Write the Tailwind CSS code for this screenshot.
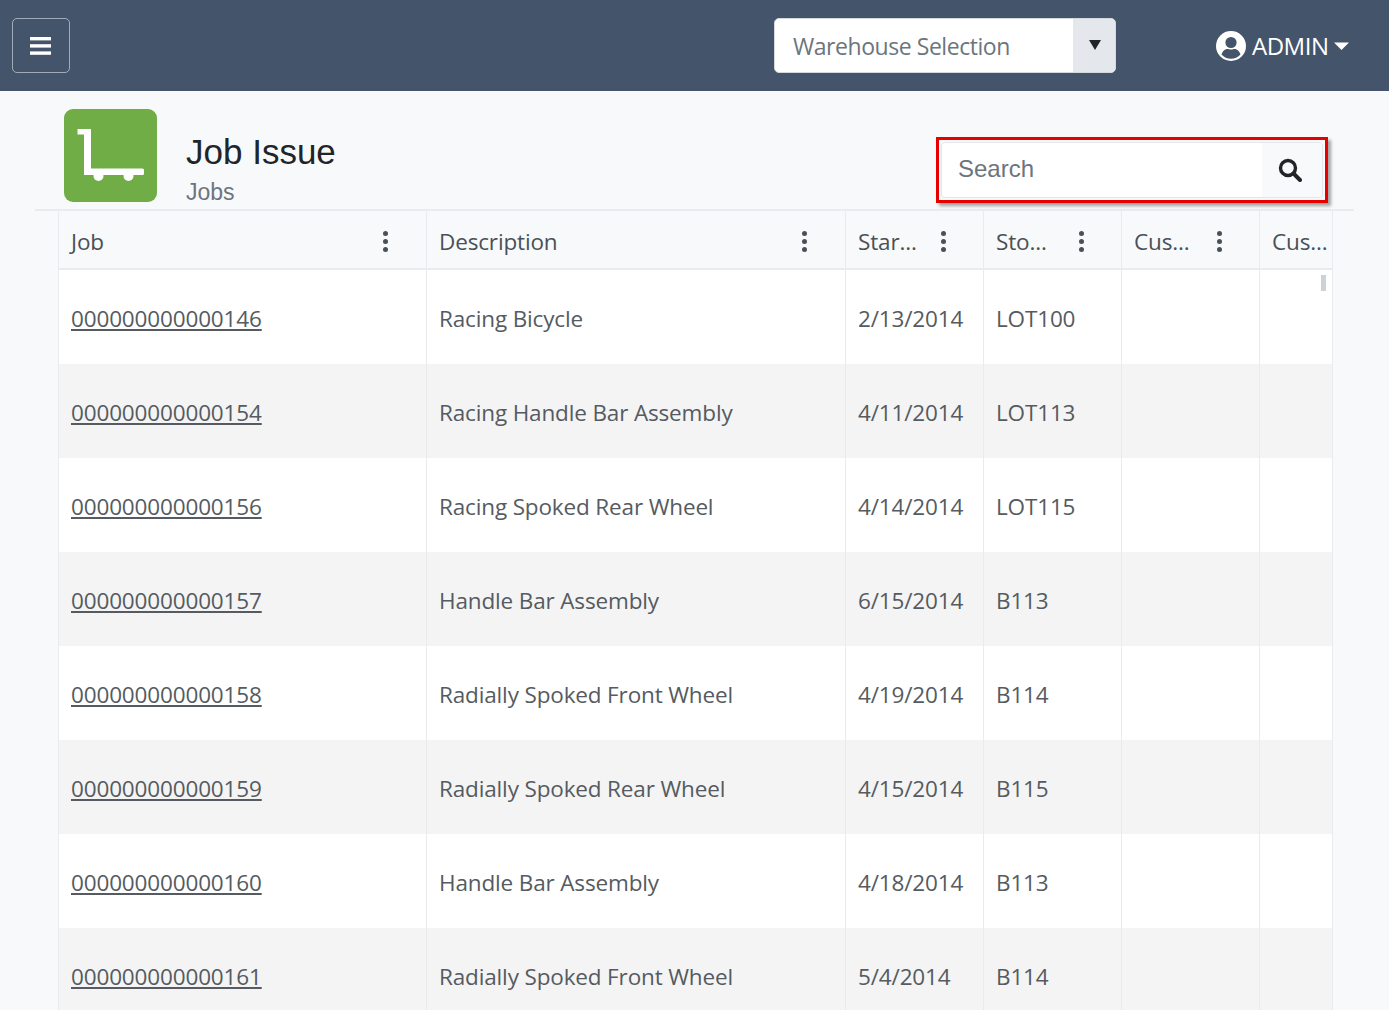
<!DOCTYPE html>
<html lang="en">
<head>
<meta charset="UTF-8">
<title>Job Issue</title>
<script src="https://cdn.jsdelivr.net/npm/@tailwindcss/browser@4"></script>
</head>
<body class="bg-white overflow-hidden w-[1393px] font-['Open_Sans',sans-serif]">
<div class="w-[1389px] h-[1010px] bg-[#f8f9fa] overflow-hidden">
  <header class="h-[91px] bg-[#44546a] flex items-center">
    <button class="ml-3 w-[58px] h-[55px] border border-white/50 rounded-[5px] flex items-center justify-center pr-[2px]">
      <svg width="21" height="18" viewBox="0 0 21 18" fill="#fff"><rect y="0" width="21" height="3.4"/><rect y="7.2" width="21" height="3.4"/><rect y="14.4" width="21" height="3.4"/></svg>
    </button>
    <div class="ml-[704px] w-[342px] h-[55px] flex rounded-[5px] overflow-hidden border border-[#d5d8dc] bg-white">
      <div class="flex-1 pl-[18px] pt-[2px] flex items-center text-[23px] text-[#6c757d] tracking-[-0.45px]">Warehouse Selection</div>
      <div class="w-[42px] bg-[#e4e7eb] flex items-center justify-center pb-[1px] pl-[2px]">
        <svg width="12" height="10" viewBox="0 0 12 10" fill="#212529"><path d="M0 0h12L6 10z"/></svg>
      </div>
    </div>
    <div class="ml-[100px] flex items-center text-white">
      <svg width="30" height="30" viewBox="0 0 30 30"><circle cx="15" cy="15" r="15" fill="#fff"/><circle cx="15" cy="11.5" r="5.6" fill="#44546a"/><path d="M5.5 23.5c1.2-4 4-5.600 6-5.600 1 0 1.800.7 3.500.7s2.500-.7 3.500-.7c2 0 4.800 1.600 6 5.600-2.400 2.700-5.800 4.300-9.500 4.300s-7.100-1.600-9.500-4.300z" fill="#44546a"/></svg>
      <span class="ml-[6px] text-[24px] tracking-[-0.5px] leading-none">ADMIN</span>
      <svg class="ml-[6px]" width="15" height="8" viewBox="0 0 15 8" fill="#fff"><path d="M0 .5h15L7.500 8z"/></svg>
    </div>
  </header>

  <section class="relative h-[120px] ml-[35px] w-[1319px] border-b-2 border-[#e9ecef]">
    <div class="absolute left-[29px] top-[18px] w-[93px] h-[93px] rounded-[9px] bg-[#70ad47] flex items-center justify-center">
      <svg width="93" height="93" viewBox="0 0 93 93" fill="#fff">
        <path d="M13.500 20h13.500v39.500h51.500a1.500 1.500 0 0 1 1.500 1.500v3.500a1.500 1.500 0 0 1-1.500 1.500h-58.500v-40.500h-6.500z"/>
        <circle cx="34.500" cy="67" r="5"/><circle cx="64.500" cy="67" r="5"/>
      </svg>
    </div>
    <div class="absolute left-[151px] top-[40px] font-['Liberation_Sans',sans-serif]">
      <h1 class="text-[35px] leading-[42px] text-[#212529]">Job Issue</h1>
      <p class="text-[23px] leading-[28px] mt-[5px] text-[#6c757d]">Jobs</p>
    </div>
    <div class="absolute left-[901px] top-[46px] w-[392px] h-[66px] border-[3px] border-[#e60000] p-[2px] shadow-[3px_3px_3px_rgba(0,0,0,0.35)]">
      <div class="h-full flex border border-[#e3e6ea] rounded-[4px] bg-white overflow-hidden">
        <div class="flex-1 pl-[16px] pb-[2px] flex items-center text-[24px] text-[#6c757d] font-['Liberation_Sans',sans-serif]">Search</div>
        <div class="w-[60px] bg-[#f8f9fa] flex items-center justify-center pr-[5px]">
          <svg width="24" height="24" viewBox="0 0 24 24" fill="none" stroke="#212529"><circle cx="10" cy="10" r="7.500" stroke-width="3.400"/><path d="M15.500 15.500l6.500 6.500" stroke-width="4" stroke-linecap="round"/></svg>
        </div>
      </div>
    </div>
  </section>

  <div class="ml-[58px] w-[1275px] border-l border-r border-[#e9ecef] bg-white">
    <div class="grid grid-cols-[367px_419px_138px_138px_138px_1fr] h-[59px] bg-[#f8f9fa] border-b-2 border-[#e9ecef] text-[22.5px] text-[#495057] tracking-[-0.15px]">
      <div class="flex items-center justify-between pl-3 pt-[3px] pr-[38px]"><span class="pt-[2px]">Job</span> <i class="flex flex-col gap-[3px]"><b class="w-[5px] h-[5px] rounded-full bg-[#495057]"></b><b class="w-[5px] h-[5px] rounded-full bg-[#495057]"></b><b class="w-[5px] h-[5px] rounded-full bg-[#495057]"></b></i></div>
      <div class="flex items-center justify-between pl-3 pt-[3px] pr-[38px] border-l border-[#e9ecef]"><span class="pt-[2px]">Description</span> <i class="flex flex-col gap-[3px]"><b class="w-[5px] h-[5px] rounded-full bg-[#495057]"></b><b class="w-[5px] h-[5px] rounded-full bg-[#495057]"></b><b class="w-[5px] h-[5px] rounded-full bg-[#495057]"></b></i></div>
      <div class="flex items-center justify-between pl-3 pt-[3px] pr-[37px] border-l border-[#e9ecef]"><span class="pt-[2px]">Star...</span> <i class="flex flex-col gap-[3px]"><b class="w-[5px] h-[5px] rounded-full bg-[#495057]"></b><b class="w-[5px] h-[5px] rounded-full bg-[#495057]"></b><b class="w-[5px] h-[5px] rounded-full bg-[#495057]"></b></i></div>
      <div class="flex items-center justify-between pl-3 pt-[3px] pr-[37px] border-l border-[#e9ecef]"><span class="pt-[2px]">Sto...</span> <i class="flex flex-col gap-[3px]"><b class="w-[5px] h-[5px] rounded-full bg-[#495057]"></b><b class="w-[5px] h-[5px] rounded-full bg-[#495057]"></b><b class="w-[5px] h-[5px] rounded-full bg-[#495057]"></b></i></div>
      <div class="flex items-center justify-between pl-3 pt-[3px] pr-[37px] border-l border-[#e9ecef]"><span class="pt-[2px]">Cus...</span> <i class="flex flex-col gap-[3px]"><b class="w-[5px] h-[5px] rounded-full bg-[#495057]"></b><b class="w-[5px] h-[5px] rounded-full bg-[#495057]"></b><b class="w-[5px] h-[5px] rounded-full bg-[#495057]"></b></i></div>
      <div class="flex items-center pl-3 pt-[3px] border-l border-[#e9ecef]"><span class="pt-[2px]">Cus...</span></div>
    </div>

    <div class="relative text-[22.5px] text-[#555b61] tracking-[-0.15px]">
      <div class="absolute right-[6px] top-[5px] w-[5px] h-[16px] bg-[#cfd2d5]"></div>
      <div class="grid grid-cols-[367px_419px_138px_138px_138px_1fr] h-[94px] items-stretch bg-white">
        <div class="flex items-center pl-3 pt-[4px]"><a href="#" class="underline">000000000000146</a></div>
        <div class="flex items-center pl-3 pt-[4px] border-l border-[#e9ecef]">Racing Bicycle</div>
        <div class="flex items-center pl-3 pt-[4px] border-l border-[#e9ecef]">2/13/2014</div>
        <div class="flex items-center pl-3 pt-[4px] border-l border-[#e9ecef]">LOT100</div>
        <div class="border-l border-[#e9ecef]"></div><div class="border-l border-[#e9ecef]"></div>
      </div>
      <div class="grid grid-cols-[367px_419px_138px_138px_138px_1fr] h-[94px] items-stretch bg-[#f4f4f4]">
        <div class="flex items-center pl-3 pt-[4px]"><a href="#" class="underline">000000000000154</a></div>
        <div class="flex items-center pl-3 pt-[4px] border-l border-[#e9ecef]">Racing Handle Bar Assembly</div>
        <div class="flex items-center pl-3 pt-[4px] border-l border-[#e9ecef]">4/11/2014</div>
        <div class="flex items-center pl-3 pt-[4px] border-l border-[#e9ecef]">LOT113</div>
        <div class="border-l border-[#e9ecef]"></div><div class="border-l border-[#e9ecef]"></div>
      </div>
      <div class="grid grid-cols-[367px_419px_138px_138px_138px_1fr] h-[94px] items-stretch bg-white">
        <div class="flex items-center pl-3 pt-[4px]"><a href="#" class="underline">000000000000156</a></div>
        <div class="flex items-center pl-3 pt-[4px] border-l border-[#e9ecef]">Racing Spoked Rear Wheel</div>
        <div class="flex items-center pl-3 pt-[4px] border-l border-[#e9ecef]">4/14/2014</div>
        <div class="flex items-center pl-3 pt-[4px] border-l border-[#e9ecef]">LOT115</div>
        <div class="border-l border-[#e9ecef]"></div><div class="border-l border-[#e9ecef]"></div>
      </div>
      <div class="grid grid-cols-[367px_419px_138px_138px_138px_1fr] h-[94px] items-stretch bg-[#f4f4f4]">
        <div class="flex items-center pl-3 pt-[4px]"><a href="#" class="underline">000000000000157</a></div>
        <div class="flex items-center pl-3 pt-[4px] border-l border-[#e9ecef]">Handle Bar Assembly</div>
        <div class="flex items-center pl-3 pt-[4px] border-l border-[#e9ecef]">6/15/2014</div>
        <div class="flex items-center pl-3 pt-[4px] border-l border-[#e9ecef]">B113</div>
        <div class="border-l border-[#e9ecef]"></div><div class="border-l border-[#e9ecef]"></div>
      </div>
      <div class="grid grid-cols-[367px_419px_138px_138px_138px_1fr] h-[94px] items-stretch bg-white">
        <div class="flex items-center pl-3 pt-[4px]"><a href="#" class="underline">000000000000158</a></div>
        <div class="flex items-center pl-3 pt-[4px] border-l border-[#e9ecef]">Radially Spoked Front Wheel</div>
        <div class="flex items-center pl-3 pt-[4px] border-l border-[#e9ecef]">4/19/2014</div>
        <div class="flex items-center pl-3 pt-[4px] border-l border-[#e9ecef]">B114</div>
        <div class="border-l border-[#e9ecef]"></div><div class="border-l border-[#e9ecef]"></div>
      </div>
      <div class="grid grid-cols-[367px_419px_138px_138px_138px_1fr] h-[94px] items-stretch bg-[#f4f4f4]">
        <div class="flex items-center pl-3 pt-[4px]"><a href="#" class="underline">000000000000159</a></div>
        <div class="flex items-center pl-3 pt-[4px] border-l border-[#e9ecef]">Radially Spoked Rear Wheel</div>
        <div class="flex items-center pl-3 pt-[4px] border-l border-[#e9ecef]">4/15/2014</div>
        <div class="flex items-center pl-3 pt-[4px] border-l border-[#e9ecef]">B115</div>
        <div class="border-l border-[#e9ecef]"></div><div class="border-l border-[#e9ecef]"></div>
      </div>
      <div class="grid grid-cols-[367px_419px_138px_138px_138px_1fr] h-[94px] items-stretch bg-white">
        <div class="flex items-center pl-3 pt-[4px]"><a href="#" class="underline">000000000000160</a></div>
        <div class="flex items-center pl-3 pt-[4px] border-l border-[#e9ecef]">Handle Bar Assembly</div>
        <div class="flex items-center pl-3 pt-[4px] border-l border-[#e9ecef]">4/18/2014</div>
        <div class="flex items-center pl-3 pt-[4px] border-l border-[#e9ecef]">B113</div>
        <div class="border-l border-[#e9ecef]"></div><div class="border-l border-[#e9ecef]"></div>
      </div>
      <div class="grid grid-cols-[367px_419px_138px_138px_138px_1fr] h-[94px] items-stretch bg-[#f4f4f4]">
        <div class="flex items-center pl-3 pt-[4px]"><a href="#" class="underline">000000000000161</a></div>
        <div class="flex items-center pl-3 pt-[4px] border-l border-[#e9ecef]">Radially Spoked Front Wheel</div>
        <div class="flex items-center pl-3 pt-[4px] border-l border-[#e9ecef]">5/4/2014</div>
        <div class="flex items-center pl-3 pt-[4px] border-l border-[#e9ecef]">B114</div>
        <div class="border-l border-[#e9ecef]"></div><div class="border-l border-[#e9ecef]"></div>
      </div>
    </div>
  </div>
</div>
</body>
</html>
